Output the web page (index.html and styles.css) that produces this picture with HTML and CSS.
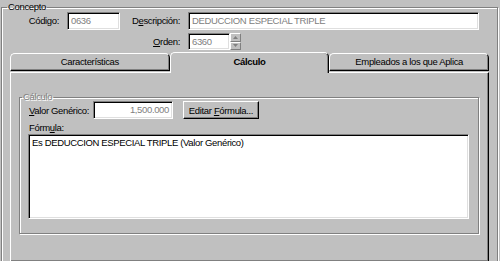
FILE: index.html
```html
<!DOCTYPE html>
<html lang="es">
<head>
    <meta charset="UTF-8">
    <title>Concepto</title>
    <link rel="stylesheet" href="styles.css">
</head>
<body>
    <fieldset class="group concepto">
        <legend>Concepto</legend>

        <!-- Datos generales -->
        <div class="fields">
            <label class="lbl">Código:</label>
            <div class="input">0636</div>
            <label class="lbl">D<u>e</u>scripción:</label>
            <div class="input">DEDUCCION ESPECIAL TRIPLE</div>

            <label class="lbl orden-lbl"><u>O</u>rden:</label>
            <div class="spin">
                <div class="input">6360</div>
                <div class="spin-btns">
                    <span class="spin-btn"><svg width="5" height="3" viewBox="0 0 5 3"><path d="M2.5 0 L5 3 L0 3 Z" fill="#808080"/></svg></span>
                    <span class="spin-btn"><svg width="5" height="3" viewBox="0 0 5 3"><path d="M0 0 L5 0 L2.5 3 Z" fill="#808080"/></svg></span>
                </div>
            </div>
        </div>

        <!-- Pestañas -->
        <div class="tabs">
            <div class="tab-strip">
                <div class="tab">Características</div>
                <div class="tab active">Cálculo</div>
                <div class="tab">Empleados a los que Aplica</div>
            </div>
            <div class="tab-panel">
                <fieldset class="group calculo">
                    <legend>Cálculo</legend>
                    <div class="valor-row">
                        <label class="valor-lbl"><u>V</u>alor Genérico:</label>
                        <div class="input num">1,500.000</div>
                        <button class="btn">Editar <u>F</u>órmula...</button>
                    </div>
                    <label class="formula-lbl">Fórm<u>u</u>la:</label>
                    <div class="formula">Es DEDUCCION ESPECIAL TRIPLE (Valor Genérico)</div>
                </fieldset>
            </div>
        </div>
    </fieldset>
</body>
</html>
```

FILE: styles.css
```css
body {
    margin: 0;
    background-color: #c0c0c0;
    color: #000;
    font-family: "Liberation Sans", Arial, sans-serif;
    font-size: 9.5px;
    letter-spacing: -0.35px;
}
u {
    text-decoration-thickness: 1px;
    text-underline-offset: 1px;
}

/* etched group box */
.group {
    margin: 0;
    border: 1px solid #808080;
    box-shadow: inset 1px 1px #fff, 1px 1px #fff;
}
.group legend {
    padding: 0 1px;
    line-height: 12px;
}
.concepto {
    margin: 1px 2px 0 1px;
    padding: 0 8px 2px 8px;
}
.concepto legend {
    margin-left: -3px;
}

/* top fields */
.fields {
    display: grid;
    grid-template-columns: 57px 53px 68px 1fr;
    grid-template-rows: 18px 17px;
    row-gap: 3px;
    margin-top: -1px;
    padding-right: 10px;
}
.lbl {
    text-align: right;
    padding-right: 8px;
    line-height: 18px;
}
.orden-lbl {
    grid-column: 3;
    line-height: 17px;
}
.input {
    box-sizing: border-box;
    height: 18px;
    border: 1px solid;
    border-color: #808080 #fff #fff #808080;
    box-shadow: inset 1px 1px #000, inset -1px -1px #dfdfdf;
    background-color: #fff;
    color: #808080;
    padding: 0 3px;
    line-height: 16px;
    white-space: nowrap;
}
.spin {
    display: flex;
    width: 53px;
}
.spin .input {
    height: 17px;
    flex: 1;
    line-height: 15px;
}
.spin-btns {
    display: flex;
    flex-direction: column;
    width: 11px;
}
.spin-btn {
    flex: 1;
    display: flex;
    align-items: center;
    justify-content: center;
    border: 1px solid;
    border-color: #fff #808080 #808080 #fff;
    box-sizing: border-box;
}

/* tab control */
.tabs {
    margin-top: 2px;
    width: 479px;
}
.tab-strip {
    display: flex;
    height: 20px;
}
.tab {
    flex: 1;
    box-sizing: border-box;
    margin-top: 1px;
    height: 18px;
    border: 1px solid;
    border-color: #fff #000 #000 #fff;
    border-radius: 5px 5px 0 0;
    box-shadow: inset -1px -1px #808080;
    text-align: center;
    line-height: 16px;
}
.tab.active {
    position: relative;
    margin-top: 0;
    height: 21px;
    border-bottom: none;
    box-shadow: inset -1px 0 #808080;
    background-color: #c0c0c0;
    font-weight: bold;
    line-height: 18px;
}
.tab-panel {
    box-sizing: border-box;
    height: 190px;
    border: 1px solid;
    border-color: #fff #000 #000 #fff;
    box-shadow: inset -1px -1px #808080;
    padding: 18px 9px 0 8px;
}

/* calculo group */
.calculo {
    padding: 0 9px 14px 9px;
}
.calculo legend {
    color: #808080;
    text-shadow: 1px 1px #fff;
    margin-left: -7px;
}
.valor-row {
    display: flex;
    align-items: center;
    margin-top: -2px;
}
.valor-lbl {
    width: 64px;
    white-space: nowrap;
}
.num {
    width: 80px;
    text-align: right;
}
.btn {
    margin-left: 10px;
    box-sizing: border-box;
    width: 76px;
    height: 18px;
    padding: 0 3px;
    border: 1px solid;
    border-color: #fff #000 #000 #fff;
    box-shadow: inset -1px -1px #808080;
    background-color: #c0c0c0;
    font: inherit;
    letter-spacing: inherit;
    color: #000;
}
.formula-lbl {
    display: block;
    margin-top: 3px;
    line-height: 12px;
}
.formula {
    box-sizing: border-box;
    height: 85px;
    margin-left: -1px;
    border: 1px solid;
    border-color: #808080 #fff #fff #808080;
    box-shadow: inset 1px 1px #000, inset -1px -1px #dfdfdf;
    background-color: #fff;
    padding: 2px 3px;
    line-height: 12px;
}
```
